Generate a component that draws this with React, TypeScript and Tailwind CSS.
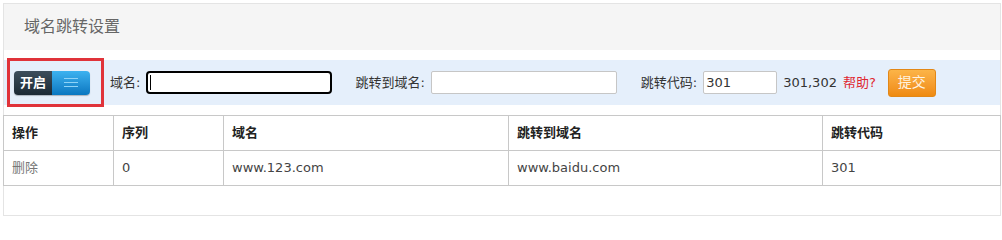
import React from "react";

const font = { fontFamily: '"DejaVu Sans", "Noto Sans CJK SC", sans-serif' };

const columns = [
  { label: "操作", w: "w-[110px]" },
  { label: "序列", w: "w-[110px]" },
  { label: "域名", w: "w-[285px]" },
  { label: "跳转到域名", w: "w-[314px]" },
  { label: "跳转代码", w: "" },
];

const rows = [
  { seq: "0", domain: "www.123.com", target: "www.baidu.com", code: "301" },
];

function Toggle() {
  return (
    <div className="flex h-[24px] w-[76px] overflow-hidden rounded-[4px] shadow-[0_1px_1px_rgba(0,0,0,0.25)]">
      <div className="flex w-[38px] items-center justify-center bg-gradient-to-b from-[#3d4e5c] to-[#1c2a35] text-[13px] font-bold text-white">
        开启
      </div>
      <div className="flex flex-1 flex-col items-center justify-center gap-[3px] bg-gradient-to-b from-[#3cb2f0] to-[#0877c0]">
        <span className="h-px w-[14px] bg-[#8fd3f7]" />
        <span className="h-px w-[14px] bg-[#8fd3f7]" />
        <span className="h-px w-[14px] bg-[#8fd3f7]" />
      </div>
    </div>
  );
}

export default function App() {
  return (
    <div className="bg-white pl-[3px] pt-[3px]" style={font}>
      <div className="h-[213px] w-[998px] border border-[#e4e4e4]">
        <div className="flex h-[46px] items-center bg-[#f5f5f5] pl-[20px] text-[16px] text-[#666]">
          域名跳转设置
        </div>

        <div className="relative mt-[10px] flex h-[45px] items-center bg-[#e5effb] pl-[10px] text-[13px] text-[#333]">
          {/* red highlight box around the switch */}
          <div className="absolute left-[3px] top-[-2px] h-[49px] w-[97px] border-[3px] border-[#e0333a]" />
          <Toggle />
          <span className="ml-[20px]">域名:</span>
          <div className="relative ml-[6px]">
            <input className="h-[23px] w-[186px] rounded-[4px] border-2 border-black bg-white outline-none" />
            <span className="absolute left-[4px] top-[4px] h-[15px] w-px bg-black" />
          </div>
          <span className="ml-[23px]">跳转到域名:</span>
          <input className="ml-[6px] h-[23px] w-[186px] rounded-[2px] border border-[#c6c6c6] bg-white outline-none" />
          <span className="ml-[24px]">跳转代码:</span>
          <input
            defaultValue="301"
            className="ml-[6px] h-[23px] w-[74px] rounded-[2px] border border-[#c6c6c6] bg-white px-[2px] text-[13px] text-[#333] outline-none"
          />
          <span className="ml-[6px]">301,302</span>
          <span className="ml-[6px] text-[13px] text-[#e0262f]">帮助?</span>
          <button className="ml-[12px] h-[28px] w-[48px] rounded-[3px] border border-[#e28717] bg-gradient-to-b from-[#fcb447] to-[#ef8a0e] text-[14px] text-[#fff3e0]">
            提交
          </button>
        </div>

        <table className="mt-[10px] ml-[-1px] w-[998px] border-collapse text-[13px]">
          <thead>
            <tr className="h-[35px]">
              {columns.map((c) => (
                <th
                  key={c.label}
                  className={`${c.w} border border-[#c8c8c8] pl-[8px] text-left font-bold text-[#222]`}
                >
                  {c.label}
                </th>
              ))}
            </tr>
          </thead>
          <tbody>
            {rows.map((r) => (
              <tr key={r.seq} className="h-[35px] text-[#444]">
                <td className="border border-[#c8c8c8] pl-[8px] text-[#777]">删除</td>
                <td className="border border-[#c8c8c8] pl-[8px]">{r.seq}</td>
                <td className="border border-[#c8c8c8] pl-[8px]">{r.domain}</td>
                <td className="border border-[#c8c8c8] pl-[8px]">{r.target}</td>
                <td className="border border-[#c8c8c8] pl-[8px]">{r.code}</td>
              </tr>
            ))}
          </tbody>
        </table>
      </div>
    </div>
  );
}
